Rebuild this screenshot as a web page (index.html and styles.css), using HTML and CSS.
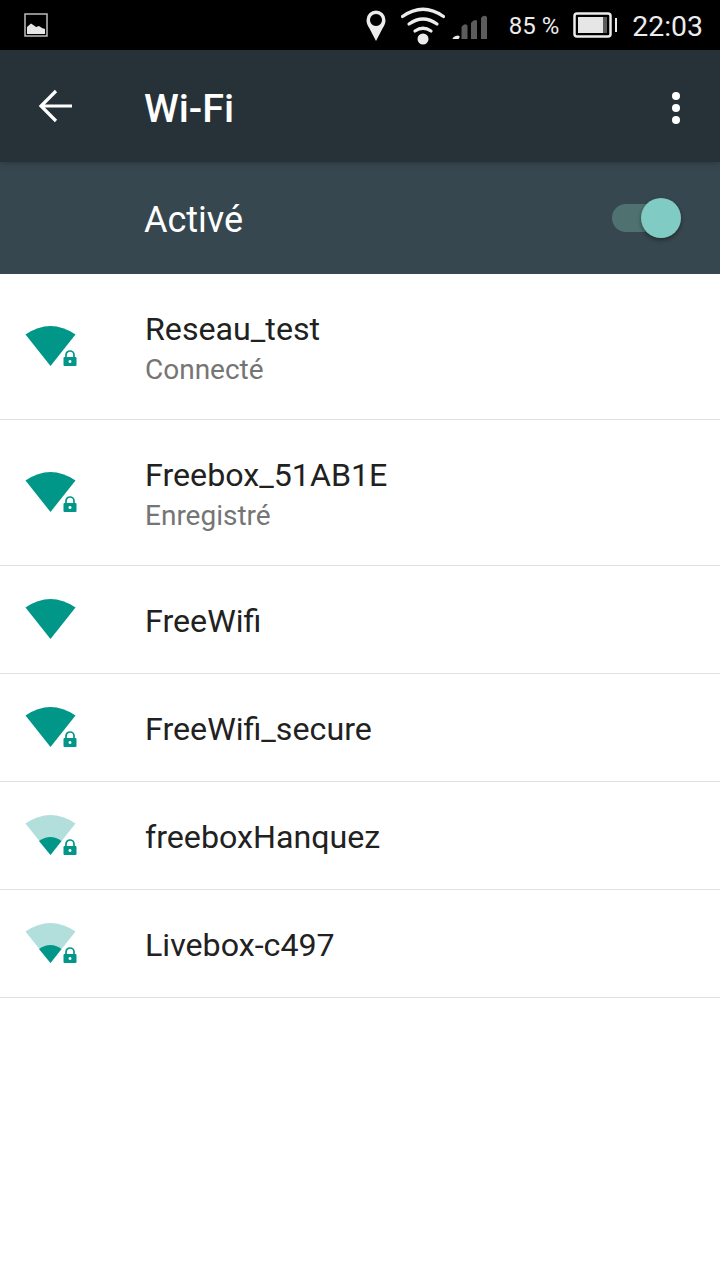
FILE: index.html
```html
<!DOCTYPE html>
<html lang="fr">
<head>
    <meta charset="UTF-8">
    <meta name="viewport" content="width=device-width, initial-scale=1.0">
    <title>Wi-Fi</title>
    <link rel="stylesheet" href="styles.css">
</head>
<body>
    <svg class="defs" width="0" height="0">
        <defs>
            <symbol id="wedge-full" viewBox="0 0 52 42">
                <path d="M0.500 9.500 Q25.500 -7.500 50.500 9.500 L25.500 41 Z" fill="#009688"/>
            </symbol>
            <symbol id="wedge-weak" viewBox="0 0 52 42">
                <path d="M0.500 9.500 Q25.500 -7.500 50.500 9.500 L25.500 41 Z" fill="#b2dfdb"/>
                <path d="M14 24.500 Q25.500 16.500 36.500 24.500 L25.500 38.500 Z" fill="#009688" transform="translate(0 2.500)"/>
            </symbol>
            <symbol id="lock" viewBox="0 0 14 17">
                <path d="M3 7.500 V5 a4 4 0 0 1 8 0 V7.500" fill="none" stroke="#009688" stroke-width="1.700"/>
                <path d="M1.500 7 H12.500 a1 1 0 0 1 1 1 V15 a1 1 0 0 1 -1 1 H1.500 a1 1 0 0 1 -1 -1 V8 a1 1 0 0 1 1 -1 Z M7 10 a1.500 1.500 0 1 0 0.010 0 Z" fill="#009688" fill-rule="evenodd"/>
            </symbol>
        </defs>
    </svg>

    <div class="status-bar">
        <svg class="status-picture" width="24" height="24" viewBox="0 0 24 24">
            <rect x="1" y="1" width="22" height="22" fill="none" stroke="#bdbdbd" stroke-width="1.500"/>
            <path d="M3 21 V14 L7 10.500 L10 12.500 L12 14 L15 13 L18 15 L21 16 V21 Z" fill="#e6e6e6"/>
        </svg>
        <div class="status-right">
            <svg class="status-pin" width="20" height="32" viewBox="0 0 20 32">
                <path fill-rule="evenodd" d="M10 0.500 a9.500 9.500 0 0 1 9.500 9.500 c0 4 -1.500 6 -3 8.500 L10 31 L3.500 18.500 C2 16 0.500 14 0.500 10 A9.500 9.500 0 0 1 10 0.500 Z M10 4 a6 6 0 1 0 0.010 0 Z" fill="#ececec"/>
            </svg>
            <svg class="status-wifi" width="44" height="38" viewBox="0 0 44 38">
                <g fill="none" stroke="#ececec" stroke-width="3.200" stroke-linecap="round">
                    <path d="M1.500 9.500 Q22 -5 42.500 9.500"/>
                    <path d="M8 17 Q22 7 36 17"/>
                    <path d="M14 24 Q22 18.500 30 24"/>
                </g>
                <circle cx="22" cy="32" r="5.500" fill="#ececec"/>
            </svg>
            <svg class="status-signal" width="36" height="25" viewBox="0 0 36 25">
                <path d="M0.500 24 Q1 21 6 20.500 Q9 21 6.500 24 Z" fill="#ececec"/>
                <path d="M9.500 24 V12 Q12.500 7.500 15.500 10.500 V24 Z M19 24 V8 Q22 4 25 5.500 V24 Z M29 24 V3 Q32 -1 35 2 V24 Z" fill="#5c5c5c"/>
            </svg>
            <span class="status-battery-text">85 %</span>
            <svg class="status-battery" width="45" height="26" viewBox="0 0 45 26">
                <rect x="1.500" y="1.500" width="36" height="23" rx="2.500" fill="none" stroke="#ececec" stroke-width="2.500"/>
                <rect x="5" y="5" width="25" height="16" fill="#e6e6e6"/>
                <rect x="30" y="5" width="4" height="16" fill="#5c5c5c"/>
                <rect x="42" y="6" width="2" height="14" fill="#ececec"/>
            </svg>
            <span class="status-time">22:03</span>
        </div>
    </div>

    <header class="toolbar">
        <svg class="back-icon" width="36" height="36" viewBox="0 0 36 36">
            <path d="M34 18 H3 M18 3 L3 18 L18 33" fill="none" stroke="#fff" stroke-width="3.200"/>
        </svg>
        <h1 class="toolbar-title">Wi-Fi</h1>
        <div class="overflow-menu">
            <span class="dot"></span>
            <span class="dot"></span>
            <span class="dot"></span>
        </div>
    </header>

    <div class="switch-bar">
        <span class="switch-label">Activé</span>
        <div class="switch">
            <div class="switch-track"></div>
            <div class="switch-thumb"></div>
        </div>
    </div>

    <ul class="wifi-list">
        <li class="wifi-row wifi-row-tall">
            <span class="wifi-icon">
                <svg class="wedge"><use href="#wedge-full"/></svg>
                <svg class="lock"><use href="#lock"/></svg>
            </span>
            <div class="wifi-text">
                <div class="wifi-name">Reseau_test</div>
                <div class="wifi-status">Connecté</div>
            </div>
        </li>
        <li class="wifi-row wifi-row-tall">
            <span class="wifi-icon">
                <svg class="wedge"><use href="#wedge-full"/></svg>
                <svg class="lock"><use href="#lock"/></svg>
            </span>
            <div class="wifi-text">
                <div class="wifi-name">Freebox_51AB1E</div>
                <div class="wifi-status">Enregistré</div>
            </div>
        </li>
        <li class="wifi-row">
            <span class="wifi-icon">
                <svg class="wedge"><use href="#wedge-full"/></svg>
            </span>
            <div class="wifi-name">FreeWifi</div>
        </li>
        <li class="wifi-row">
            <span class="wifi-icon">
                <svg class="wedge"><use href="#wedge-full"/></svg>
                <svg class="lock"><use href="#lock"/></svg>
            </span>
            <div class="wifi-name">FreeWifi_secure</div>
        </li>
        <li class="wifi-row">
            <span class="wifi-icon">
                <svg class="wedge"><use href="#wedge-weak"/></svg>
                <svg class="lock"><use href="#lock"/></svg>
            </span>
            <div class="wifi-name">freeboxHanquez</div>
        </li>
        <li class="wifi-row">
            <span class="wifi-icon">
                <svg class="wedge"><use href="#wedge-weak"/></svg>
                <svg class="lock"><use href="#lock"/></svg>
            </span>
            <div class="wifi-name">Livebox-c497</div>
        </li>
    </ul>
</body>
</html>
```

FILE: styles.css
```css
:root {
    --toolbar-color: #263238;
    --switch-bar-color: #37474f;
    --accent-color: #80cbc4;
    --text-dark: #212121;
    --text-light: #757575;
    --divider: #e0e0e0;
}

* {
    box-sizing: border-box;
}

body {
    font-family: Roboto, sans-serif;
    margin: 0;
    background: white;
    color: var(--text-dark);
}

.defs {
    position: absolute;
}

.status-bar {
    display: flex;
    justify-content: space-between;
    align-items: center;
    height: 50px;
    background: black;
    color: #ececec;
    padding: 0 17px 0 24px;
}

.status-right {
    display: flex;
    align-items: center;
}

.status-pin {
    margin: 1px 15px 0 0;
}

.status-wifi {
    margin-right: 7px;
    margin-top: 1px;
}

.status-signal {
    margin-top: 5px;
    margin-right: 21px;
}

.status-battery-text {
    font-size: 24px;
    margin: 2px 14px 0 0;
}

.status-battery {
    margin-right: 14px;
}

.status-time {
    font-size: 28.400px;
    margin-top: 2px;
}

.toolbar {
    display: flex;
    align-items: center;
    height: 112px;
    background: var(--toolbar-color);
    padding: 0 40px 0 38px;
    box-shadow: 0 1px 6px rgba(0,0,0,0.25);
    position: relative;
}

.back-icon {
    margin-right: 70px;
}

.toolbar-title {
    flex-grow: 1;
    margin: 4px 0 0;
    font-size: 39.500px;
    font-weight: 500;
    color: white;
}

.overflow-menu {
    display: flex;
    flex-direction: column;
    gap: 4px;
    margin-top: 3px;
}

.dot {
    width: 8px;
    height: 8px;
    border-radius: 50%;
    background: white;
}

.switch-bar {
    display: flex;
    justify-content: space-between;
    align-items: center;
    height: 112px;
    background: var(--switch-bar-color);
    padding: 0 39px 0 144px;
}

.switch-label {
    font-size: 36px;
    color: white;
    margin-top: 4px;
}

.switch {
    position: relative;
    width: 69px;
    height: 40px;
    display: flex;
    align-items: center;
}

.switch-track {
    width: 56px;
    height: 28px;
    border-radius: 14px;
    background: #4f7271;
}

.switch-thumb {
    position: absolute;
    right: 0;
    top: 0;
    width: 40px;
    height: 40px;
    border-radius: 50%;
    background: var(--accent-color);
    box-shadow: 0 2px 4px rgba(0,0,0,0.4);
}

.wifi-list {
    list-style: none;
    margin: 0;
    padding: 0;
}

.wifi-row {
    display: flex;
    align-items: center;
    height: 108px;
    border-bottom: 1px solid var(--divider);
}

.wifi-row-tall {
    height: 146px;
}

.wifi-icon {
    position: relative;
    display: block;
    width: 52px;
    height: 42px;
    margin: -2px 68px 0 25px;
}

.wedge {
    display: block;
    width: 52px;
    height: 42px;
}

.lock {
    position: absolute;
    left: 38px;
    top: 25px;
    width: 14px;
    height: 17px;
}

.wifi-name {
    font-size: 32.200px;
    line-height: 40px;
    padding-top: 2px;
}

.wifi-text {
    padding-top: 3px;
}

.wifi-status {
    font-size: 28px;
    line-height: 40px;
    padding-top: 1px;
    color: var(--text-light);
}
```
